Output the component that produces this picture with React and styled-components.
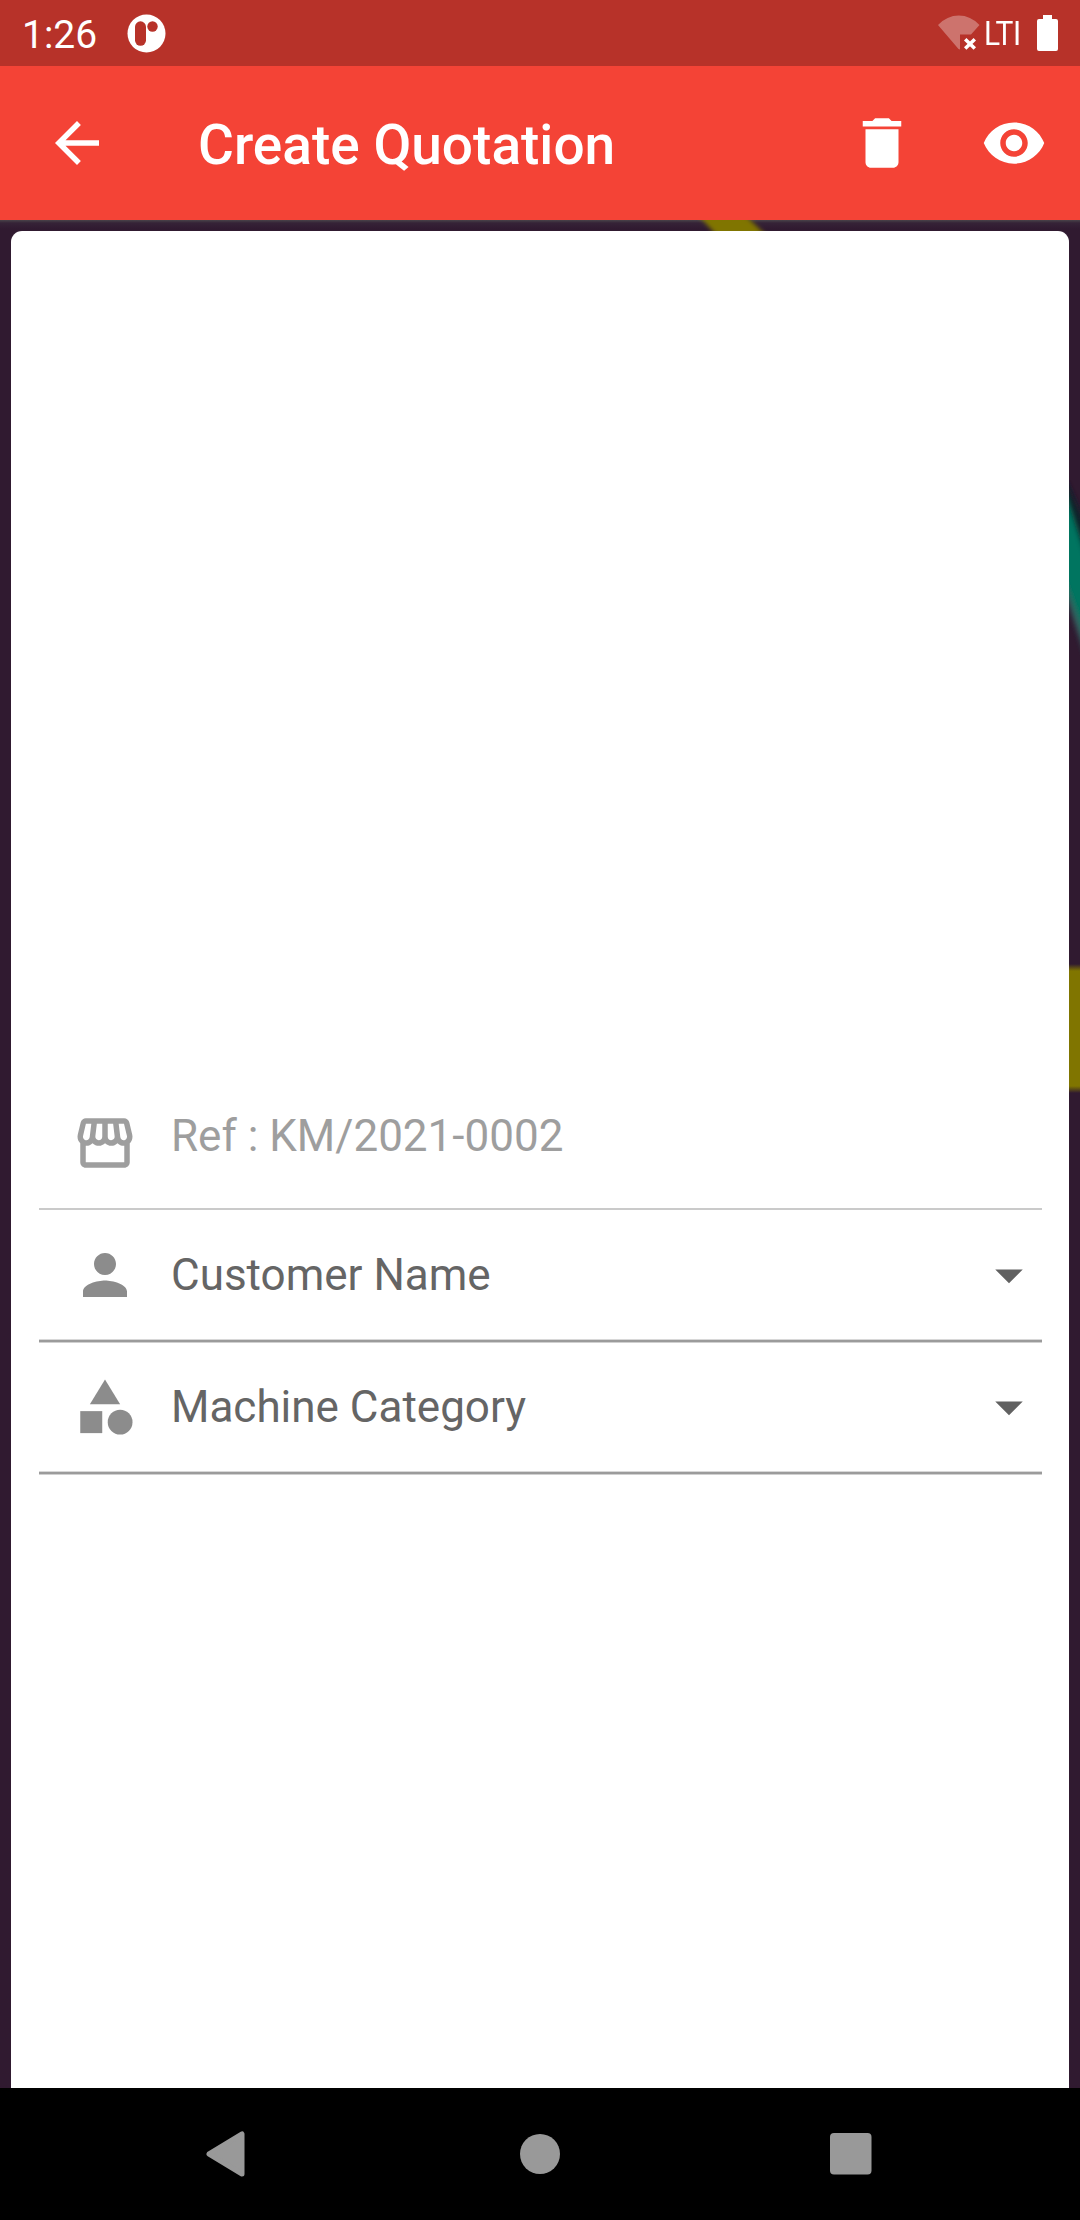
import React from "react";
import styled, { createGlobalStyle } from "styled-components";
import {
  MdArrowBack,
  MdArrowDropDown,
  MdCategory,
  MdDelete,
  MdPerson,
  MdStorefront,
  MdVisibility,
} from "react-icons/md";

const GlobalStyle = createGlobalStyle`
  *, *::before, *::after { box-sizing: border-box; }
  body { margin: 0; background: #000; }
  svg { display: block; flex: none; }
`;

const Screen = styled.div`
  display: flex;
  flex-direction: column;
  width: 1080px;
  height: 2220px;
  overflow: hidden;
  font-family: Roboto, "Noto Sans", sans-serif;
`;

const StatusBar = styled.header`
  display: flex;
  align-items: center;
  flex: none;
  height: 66px;
  padding: 0 21px 0 22px;
  background: #b73229;
  color: #fff;
`;

const Clock = styled.time`
  width: 105px;
  font-size: 39px;
  line-height: 46px;
  padding-top: 3px;
`;

const StatusIcons = styled.div`
  display: flex;
  align-items: center;
  margin-left: auto;
`;

const Network = styled.span`
  width: 37px;
  margin: 0 15px 0 4px;
  white-space: nowrap;
  font-size: 34px;
  line-height: 40px;
  letter-spacing: -0.6px;
  transform: scaleX(0.88);
  transform-origin: left center;
`;

const AppBar = styled.nav`
  display: flex;
  align-items: center;
  flex: none;
  height: 154px;
  padding: 0 33px 0 44px;
  background: #f44336;
  color: #fff;
`;

const IconButton = styled.button`
  display: flex;
  padding: 0;
  border: 0;
  background: none;
  color: inherit;
  font-size: 66px;
`;

const Title = styled.h1`
  flex: 1;
  margin: 0 0 0 88px;
  padding-top: 3px;
  font-size: 55px;
  font-weight: 500;
  line-height: 64px;
`;

const Actions = styled.div`
  display: flex;
  gap: 66px;
`;

const Body = styled.main`
  position: relative;
  display: flex;
  flex: 1;
  min-height: 0;
  padding: 11px 11px 0;
  background:
    linear-gradient(transparent, #807500 7px, #807500 122px, transparent 129px) 100% 744px / 11px 129px no-repeat,
    #301a30;

  &::before {
    content: "";
    position: absolute;
    inset: 0 0 auto;
    height: 9px;
    background: linear-gradient(rgba(90, 95, 90, 0.6), rgba(70, 60, 75, 0.25) 3px, transparent);
  }
`;

const TealRibbon = styled.svg`
  position: absolute;
  right: 0;
  top: 260px;
`;

const OliveRibbon = styled.svg`
  position: absolute;
  left: 690px;
  top: 0;
`;

const Card = styled.section`
  position: relative;
  flex: 1;
  padding: 859px 27px 0 28px;
  border-radius: 11px 11px 0 0;
  background: #fff;
`;

const Field = styled.div`
  display: flex;
  align-items: flex-start;
  height: ${(p) => p.$height}px;
  padding: ${(p) => p.$top}px 0 0 33px;
  color: ${(p) => (p.$disabled ? "#9e9e9e" : "#8c8c8c")};
  font-size: 66px;
`;

const Label = styled.span`
  flex: 1;
  margin-left: 33px;
  padding-top: ${(p) => p.$shift}px;
  color: ${(p) => (p.$disabled ? "#9e9e9e" : "#656565")};
  font-size: 44px;
  line-height: 52px;
`;

const Caret = styled(MdArrowDropDown)`
  color: #616161;
`;

const ThinRule = styled.div`
  height: 2px;
  background: #cacaca;
`;

const Rule = styled.div`
  height: 4px;
  background: linear-gradient(#d8d8d8 1px, #9b9b9b 1px 3px, #d0d0d0 3px);
`;

const NavBar = styled.footer`
  display: flex;
  align-items: center;
  flex: none;
  height: 132px;
  padding: 0 208px 0 206px;
  justify-content: space-between;
  background: #000;
  color: #999;
`;

const AppLogo = () => (
  <svg width="39" height="39" viewBox="0 0 39 39">
    <circle cx="19.5" cy="19.5" r="19" fill="#fff" />
    <rect x="8" y="7.3" width="11" height="24.5" rx="5.5" fill="#b73229" />
    <circle cx="25.5" cy="12.5" r="5.2" fill="#b73229" />
  </svg>
);

const Wifi = () => (
  <svg width="42" height="36" viewBox="0 0 42 36">
    <path d="M0 10Q9 .5 20.8 .5T41.500 10L33 19.500H22V34.500L20.500 34Z" fill="#cd736d" />
    <path d="M27.200 24.200L36.800 33.400M36.800 24.200L27.200 33.400" stroke="#fff" strokeWidth="3.500" />
  </svg>
);

const Battery = () => (
  <svg width="23" height="36" viewBox="0 0 23 36">
    <path d="M7 0h9v4h4q2 0 2 2v28q0 2-2 2H3q-2 0-2-2V6q0-2 2-2h4z" fill="#fff" />
  </svg>
);

export default function App() {
  return (
    <>
      <GlobalStyle />
      <Screen>
        <StatusBar>
          <Clock>1:26</Clock>
          <AppLogo />
          <StatusIcons>
            <Wifi />
            <Network>LTI</Network>
            <Battery />
          </StatusIcons>
        </StatusBar>
        <AppBar>
          <IconButton aria-label="Back"><MdArrowBack /></IconButton>
          <Title>Create Quotation</Title>
          <Actions>
            <IconButton aria-label="Delete"><MdDelete /></IconButton>
            <IconButton aria-label="Preview"><MdVisibility /></IconButton>
          </Actions>
        </AppBar>
        <Body>
          <OliveRibbon width="90" height="12" viewBox="0 0 90 12">
            <defs>
              <filter id="softOlive" filterUnits="userSpaceOnUse" x="0" y="-20" width="90" height="60">
                <feGaussianBlur stdDeviation="2" />
              </filter>
            </defs>
            <path d="M-2 -16L40 30H92L43 -16Z" fill="#807500" filter="url(#softOlive)" />
          </OliveRibbon>
          <TealRibbon width="11" height="190" viewBox="0 0 11 190">
            <defs>
              <filter id="softTeal" filterUnits="userSpaceOnUse" x="-20" y="-40" width="60" height="270">
                <feGaussianBlur stdDeviation="2.500" />
              </filter>
            </defs>
            <g filter="url(#softTeal)">
              <path d="M-12 -20L24 60V120H-12Z" fill="#102029" />
              <path d="M-12 84L24 124V200L-12 88Z" fill="#33605f" />
              <path d="M-12 -12L24 100V178L-12 78Z" fill="#007461" />
            </g>
          </TealRibbon>
          <Card>
            <Field $top={20} $height={118} $disabled>
              <MdStorefront />
              <Label $shift={0} $disabled>Ref : KM/2021-0002</Label>
            </Field>
            <ThinRule />
            <Field $top={32} $height={129}>
              <MdPerson />
              <Label $shift={7}>Customer Name</Label>
              <Caret />
            </Field>
            <Rule />
            <Field $top={31} $height={128}>
              <MdCategory />
              <Label $shift={7}>Machine Category</Label>
              <Caret />
            </Field>
            <Rule />
          </Card>
        </Body>
        <NavBar>
          <svg width="44" height="46" viewBox="0 0 44 46">
            <path d="M3 23L36 3V43Z" fill="currentColor" stroke="currentColor" strokeWidth="5" strokeLinejoin="round" />
          </svg>
          <svg width="40" height="40" viewBox="0 0 40 40">
            <circle cx="20" cy="20" r="20" fill="currentColor" />
          </svg>
          <svg width="42" height="42" viewBox="0 0 42 42">
            <rect width="41.500" height="41.500" rx="4" fill="currentColor" />
          </svg>
        </NavBar>
      </Screen>
    </>
  );
}
